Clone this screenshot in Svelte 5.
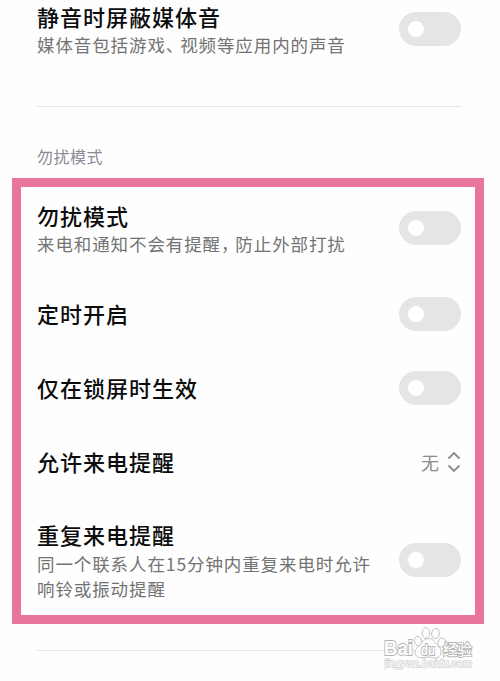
<script lang="ts">
  interface Setting {
    title: string;
    lines?: string[];
    value?: string;
    on?: boolean;
  }

  let muteMedia: Setting[] = $state([
    { title: '静音时屏蔽媒体音', lines: ['媒体音包括游戏、视频等应用内的声音'], on: false },
  ]);

  let dndSettings: Setting[] = $state([
    { title: '勿扰模式', lines: ['来电和通知不会有提醒，防止外部打扰'], on: false },
    { title: '定时开启', on: false },
    { title: '仅在锁屏时生效', on: false },
    { title: '允许来电提醒', value: '无' },
    {
      title: '重复来电提醒',
      lines: ['同一个联系人在15分钟内重复来电时允许', '响铃或振动提醒'],
      on: false,
    },
  ]);

  // Split a line so the wide punctuation can be tightened
  function splitPunctuation(line: string): string[] {
    return line.split(/([、，])/);
  }
</script>

{#snippet row(item: Setting)}
  <div class="row" class:detailed={item.lines} class:tall={item.lines && item.lines.length > 1}>
    <div class="text">
      <div class="title">{item.title}</div>
      {#each item.lines ?? [] as line}
        <div class="line">{#each splitPunctuation(line) as part}<span class:punct={part === '、' || part === '，'}>{part}</span>{/each}</div>
      {/each}
    </div>
    {#if item.value}
      <div class="picker">
        <span>{item.value}</span>
        <svg width="14" height="22" viewBox="0 0 14 22">
          <path d="M1.5 7.5 L7 2 L12.5 7.5 M1.5 14.5 L7 20 L12.5 14.5" />
        </svg>
      </div>
    {:else}
      <button
        class="switch"
        class:on={item.on}
        role="switch"
        aria-checked={item.on}
        aria-label={item.title}
        onclick={() => (item.on = !item.on)}
      >
        <span class="knob"></span>
      </button>
    {/if}
  </div>
{/snippet}

<main class="page">
  <section class="top">
    {#each muteMedia as item}
      {@render row(item)}
    {/each}
  </section>
  <hr />
  <h2>勿扰模式</h2>
  <section class="highlight">
    {#each dndSettings as item}
      {@render row(item)}
    {/each}
  </section>
  <hr class="last" />

  <div class="watermark">
    <svg width="94" height="50" viewBox="0 0 94 50">
      <g class="outline">
        <ellipse cx="34" cy="16" rx="3.6" ry="4.8" transform="rotate(-15 34 16)" />
        <ellipse cx="42" cy="8" rx="3.8" ry="5.2" />
        <ellipse cx="51.5" cy="8.5" rx="3.8" ry="5.2" transform="rotate(8 51.5 8.5)" />
        <ellipse cx="57.5" cy="17.5" rx="3.5" ry="4.6" transform="rotate(15 57.5 17.5)" />
        <path d="M45 13.5 C50 13.5 51 19 55 22 C59 26 57 33 51 33 C47 33 46 31.5 43 32 C38 33.5 31 33 31 27.5 C31 23 36 21 38 17 C40 14.5 42 13.5 45 13.5 Z" />
        <text class="bai" x="0" y="30" textLength="29" lengthAdjust="spacingAndGlyphs">Bai</text>
        <text class="du" x="37" y="29.5" textLength="14" lengthAdjust="spacingAndGlyphs">du</text>
        <text class="jy" x="59" y="30" textLength="29" lengthAdjust="spacingAndGlyphs">经验</text>
      </g>
      <text class="url" x="0" y="42" textLength="88" lengthAdjust="spacingAndGlyphs">jingyan.baidu.com</text>
    </svg>
  </div>
</main>

<style>
  :global(body) {
    margin: 0;
    background: #fefefe;
  }

  .page {
    position: relative;
    box-sizing: border-box;
    width: 500px;
    height: 681px;
    overflow: hidden;
    background: #fefefe;
    font-family: "Noto Sans CJK SC", sans-serif;
  }

  .top {
    height: 106px;
    padding: 0 39px 0 37px;
    box-sizing: border-box;
  }

  .top .row {
    align-items: flex-start;
    height: 62px;
  }

  hr {
    height: 1px;
    margin: 0 39px 0 37px;
    border: none;
    background: #e4e4e4;
  }

  h2 {
    margin: 37px 0 0 37px;
    height: 34px;
    font-size: 16px;
    font-weight: 400;
    line-height: 25px;
    letter-spacing: 0.5px;
    color: #898b96;
  }

  .highlight {
    box-sizing: border-box;
    width: 472px;
    height: 446px;
    margin: 0 0 0 12px;
    border: 9px solid #e9759a;
    padding: 0 14px 0 16px;
  }

  .row {
    display: flex;
    align-items: center;
    justify-content: space-between;
    box-sizing: border-box;
    height: 73.7px;
  }

  .highlight .detailed {
    align-items: flex-start;
    height: 92px;
    padding-top: 14px;
  }

  .highlight .tall {
    height: 114px;
    padding-top: 20px;
  }

  .title {
    height: 28px;
    margin-bottom: 5px;
    font-size: 22px;
    font-weight: 500;
    line-height: 28px;
    letter-spacing: 1px;
    color: #0c0c0c;
    white-space: nowrap;
  }

  .detailed .title {
    margin-bottom: 2px;
  }

  .tall .title {
    margin-bottom: 3px;
  }

  .top .title {
    height: 32px;
    line-height: 32px;
    margin-bottom: 0;
  }

  .line {
    height: 25px;
    font-size: 17.5px;
    line-height: 25px;
    letter-spacing: 0.9px;
    color: #737373;
    white-space: nowrap;
  }

  /* Half-width punctuation with a little air after it */
  .punct {
    margin-right: 4.7px;
    font-feature-settings: "halt";
  }

  .switch {
    display: flex;
    align-items: center;
    box-sizing: border-box;
    width: 62px;
    height: 34px;
    margin-bottom: 3px;
    padding: 0 9px;
    border: none;
    border-radius: 17px;
    background: #e5e5e5;
  }

  .switch.on {
    justify-content: flex-end;
    background: #3482ff;
  }

  .detailed .switch {
    margin-top: 10px;
  }

  .top .switch {
    margin: 12px 0 0;
  }

  .tall .switch {
    margin-top: 23px;
  }

  .knob {
    width: 16px;
    height: 16px;
    border-radius: 50%;
    background: #fff;
  }

  .picker {
    display: flex;
    align-items: center;
    gap: 8px;
    padding-bottom: 3px;
    font-size: 18px;
    color: #8c8c8c;
  }

  .picker path {
    fill: none;
    stroke: #8c8c8c;
    stroke-width: 1.8;
  }

  .last {
    margin-top: 26px;
  }

  /* Sits over the bottom divider */
  .watermark {
    position: absolute;
    left: 384px;
    top: 625px;
  }

  .outline ellipse,
  .outline path {
    fill: #fefefe;
    stroke: #bdbdbd;
    stroke-width: 0.9;
  }

  .outline text {
    fill: #fefefe;
    stroke: #b4b4b4;
    stroke-width: 1.8;
    paint-order: stroke;
  }

  .bai {
    font: bold 21px "Liberation Sans", sans-serif;
  }

  .outline .du {
    font: bold 14px "Liberation Sans", sans-serif;
  }

  .jy {
    font-size: 15px;
    font-weight: 500;
  }

  .url {
    font: italic 10.5px "Liberation Sans", sans-serif;
    fill: #fefefe;
    stroke: #d2d2d2;
    stroke-width: 1.4;
    paint-order: stroke;
  }
</style>
